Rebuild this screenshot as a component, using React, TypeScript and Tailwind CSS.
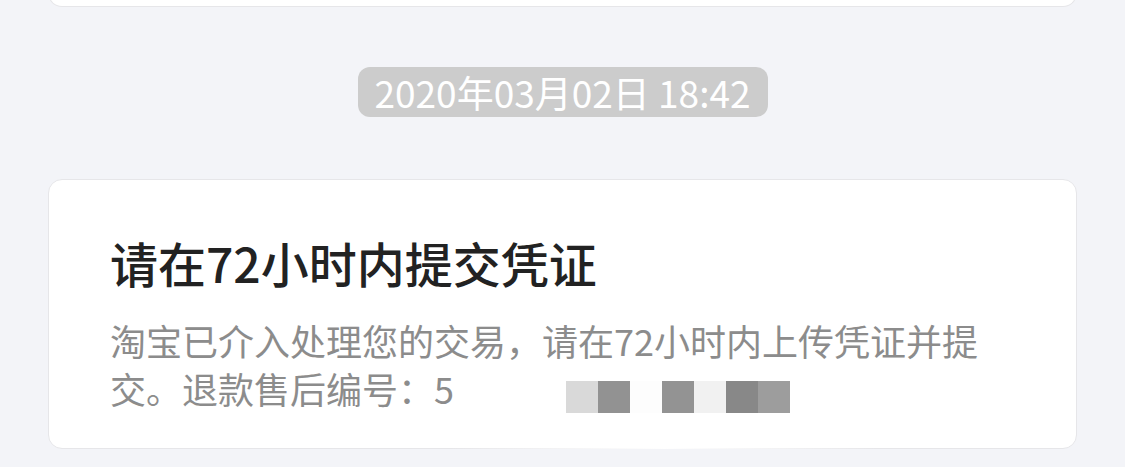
import React from 'react';

const mosaic = ['#d9d9d9', '#929292', '#fdfdfd', '#939393', '#f1f1f1', '#888888', '#9d9d9d'];

const App = () => {
    return (
        <div className="w-[1125px] h-[467px] overflow-hidden bg-[#f3f4f8] font-['Noto_Sans_CJK_SC','Noto_Sans',sans-serif]">
            {/* previous message card, mostly scrolled off */}
            <div className="mx-[48px] -mt-[40px] h-[47px] bg-white rounded-b-[14px] border border-t-0 border-[#e6e6e9]" />

            <div className="flex justify-center mt-[60px]">
                <div className="h-[50px] px-[17px] rounded-[12px] bg-[#cccccc] text-white text-[37px] leading-[50px] flex items-center">
                    2020年03月02日 18:42
                </div>
            </div>

            <div className="relative mx-[48px] mt-[62px] bg-white rounded-[14px] border border-[#e6e6e9] pl-[61px] pr-[40px] pt-[48px] pb-[36px]">
                <h2 className="text-[48px] leading-[68px] font-medium text-[#222222]">请在72小时内提交凭证</h2>
                <p className="mt-[20px] text-[36px] leading-[48px] text-[#8c8c8c] w-[890px]">
                    淘宝已介入处理您的交易，请在72小时内上传凭证并提交。退款售后编号：5
                </p>
                <div className="absolute left-[517px] top-[201px] flex">
                    {mosaic.map((c, i) => (
                        <div key={i} className="w-[32px] h-[32px]" style={{ backgroundColor: c }} />
                    ))}
                </div>
                <div className="absolute -bottom-px left-[400px] w-[430px] h-[2px] bg-gradient-to-r from-transparent via-white to-transparent" />
            </div>
        </div>
    );
};

export default App;
